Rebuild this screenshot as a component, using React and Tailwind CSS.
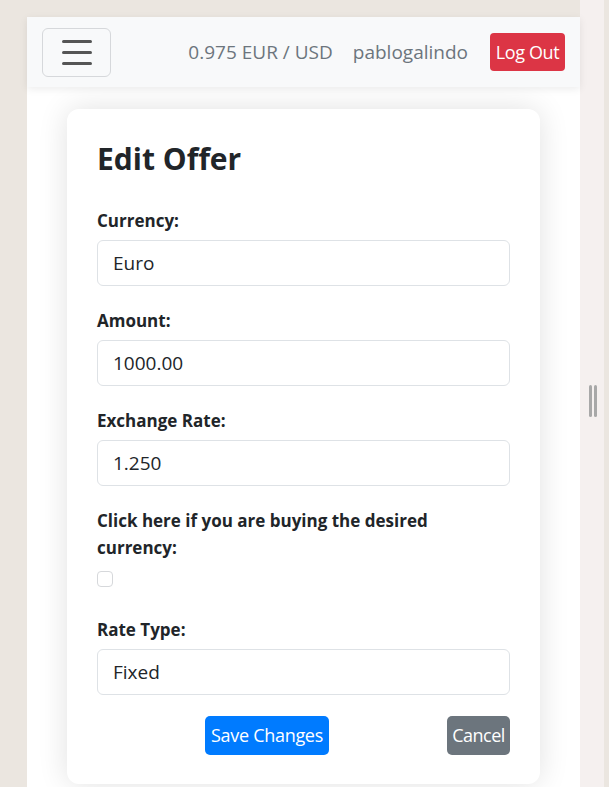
import { useState } from "react";

function Field({ label, value }) {
  return (
    <div className="flex flex-col">
      <label className="font-bold text-[17px] leading-[27px] text-[#212529] mb-[6px]">{label}</label>
      <input
        readOnly
        value={value}
        className="h-[46px] w-full rounded-[6px] border border-[#dee2e6] bg-white px-[15px] text-[19px] text-[#212529] outline-none"
      />
    </div>
  );
}

export default function App() {
  const [buying, setBuying] = useState(false);

  return (
    <div
      className="flex h-[787px] w-[609px] overflow-hidden bg-[#ebe6e0]"
      style={{ fontFamily: '"Open Sans", "Noto Sans", sans-serif' }}
    >
      {/* left gutter */}
      <div className="w-[27px] shrink-0" />

      {/* main column */}
      <div className="mt-[17px] flex w-[553px] shrink-0 flex-col bg-white">
        {/* NAVBAR */}
        <div className="relative z-10 flex h-[70px] items-center bg-[#f8f9fa] pl-[15px] pr-[15px] shadow-[0_2px_8px_rgba(0,0,0,0.08)]">
          <button className="flex h-[49px] w-[69px] flex-col items-center justify-center gap-[8px] rounded-[6px] border border-[#d6d8db]">
            <span className="block h-[3px] w-[30px] rounded bg-[#555]"></span>
            <span className="block h-[3px] w-[30px] rounded bg-[#555]"></span>
            <span className="block h-[3px] w-[30px] rounded bg-[#555]"></span>
          </button>
          <div className="ml-auto flex items-center">
            <span className="text-[19px] text-[#6c757d]">0.975 EUR / USD</span>
            <span className="ml-[20px] text-[19px] text-[#6c757d]">pablogalindo</span>
            <button className="ml-[22px] h-[38px] w-[75px] rounded-[4px] bg-[#dc3545] text-[18px] text-white tracking-[-0.4px]">
              Log Out
            </button>
          </div>
        </div>

        {/* CONTENT */}
        <div className="flex-1 px-[40px] pt-[22px]">
          <div className="h-[675px] rounded-[12px] bg-white px-[30px] pt-[30px] shadow-[0_0_30px_rgba(0,0,0,0.12)]">
            <h2 className="mb-[28px] text-[30px] font-bold leading-[40px] text-[#212529]">Edit Offer</h2>

            <div className="flex flex-col gap-[21px]">
              <Field label="Currency:" value="Euro" />
              <Field label="Amount:" value="1000.00" />
              <Field label="Exchange Rate:" value="1.250" />
              <div className="flex flex-col">
                <label className="font-bold text-[17px] leading-[27px] text-[#212529] w-[380px]">
                  Click here if you are buying the desired currency:
                </label>
                <input
                  type="checkbox"
                  checked={buying}
                  onChange={() => setBuying(!buying)}
                  className="mt-[10px] h-[16px] w-[16px] appearance-none rounded-[4px] border border-[#d6d8db] bg-white"
                />
              </div>
              <div className="mt-[8px]">
                <Field label="Rate Type:" value="Fixed" />
              </div>
            </div>

            <div className="mt-[21px] flex items-center">
              <button className="ml-[108px] h-[39px] w-[124px] rounded-[5px] bg-[#007bff] text-[18px] text-white tracking-[-0.3px]">
                Save Changes
              </button>
              <button className="ml-auto h-[39px] w-[63px] rounded-[5px] bg-[#6c757d] text-[18px] text-white tracking-[-0.5px]">
                Cancel
              </button>
            </div>
          </div>
        </div>
      </div>

      {/* splitter strip */}
      <div className="flex w-[24px] shrink-0 items-center justify-center bg-[#f5f0ef] pt-[14px]">
        <div className="flex gap-[2px] pl-[2px]">
          <span className="block h-[32px] w-[3px] rounded bg-[#a8a8a8]"></span>
          <span className="block h-[32px] w-[3px] rounded bg-[#a8a8a8]"></span>
        </div>
      </div>
    </div>
  );
}
